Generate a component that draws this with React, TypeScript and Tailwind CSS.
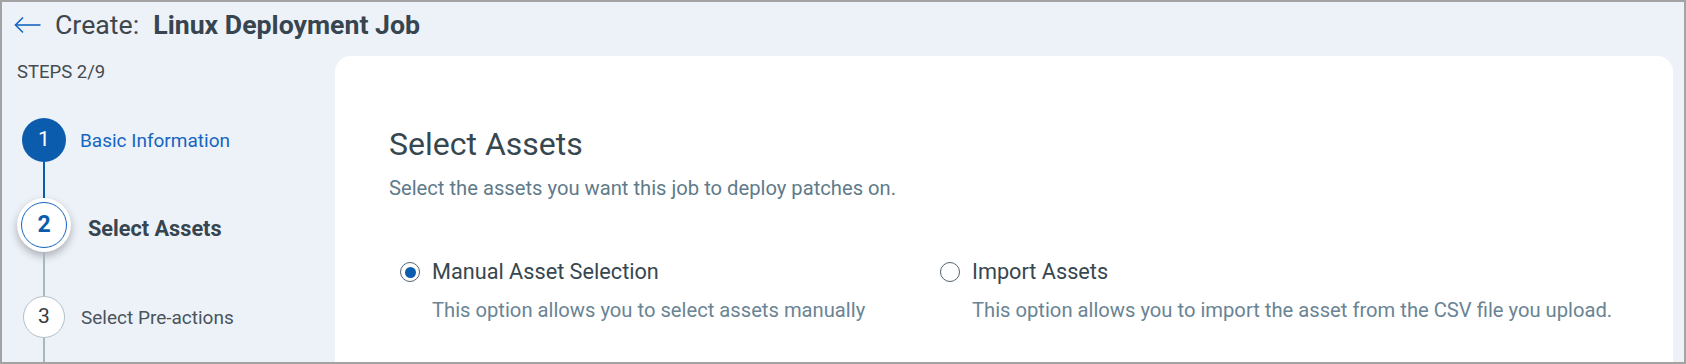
import { useState } from "react";

const steps = [
    { n: 1, label: "Basic Information" },
    { n: 2, label: "Select Assets" },
    { n: 3, label: "Select Pre-actions" },
];

const options = [
    { id: "manual", title: "Manual Asset Selection", desc: "This option allows you to select assets manually" },
    { id: "import", title: "Import Assets", desc: "This option allows you to import the asset from the CSV file you upload." },
];

const Radio = ({ checked }: { checked: boolean }) => (
    <div className="w-[20px] h-[20px] rounded-full border border-[#53636e] bg-white flex items-center justify-center shrink-0">
        {checked && <div className="w-[11px] h-[11px] rounded-full bg-[#0b5cad]" />}
    </div>
);

const App = () => {
    const [selected, setSelected] = useState("manual");

    return (
        <div className="w-[1686px] h-[364px] overflow-hidden border-2 border-[#a3a3a3] bg-[#edf2f9] font-['Roboto',sans-serif]">
            {/* header */}
            <div className="h-[46px] flex items-center pl-[12px]">
                <svg width="28" height="18" viewBox="0 0 28 18" fill="none" stroke="#1565c0" strokeWidth="1.6">
                    <path d="M1.5 9H26.5" />
                    <path d="M9 1.5L1.5 9L9 16.5" strokeLinejoin="miter" />
                </svg>
                <span className="ml-[13px] text-[26.7px] leading-[30px] text-[#3f464c]">Create:</span>
                <span className="ml-[14px] text-[26.7px] leading-[30px] font-bold text-[#36454f]">Linux Deployment Job</span>
            </div>

            <div className="flex">
                {/* steps sidebar */}
                <div className="w-[333px] shrink-0 pt-[12px]">
                    <div className="pl-[15px] text-[18.5px] leading-[24px] text-[#454b50]">STEPS 2/9</div>
                    <div className="mt-[34px] pl-[15px] flex flex-col">
                        <div className="flex items-center h-[44px]">
                            <div className="w-[54px] flex justify-center">
                                <div className="w-[44px] h-[44px] rounded-full bg-[#0b5cad] text-white text-[21px] flex items-center justify-center">
                                    {steps[0].n}
                                </div>
                            </div>
                            <span className="ml-[9px] mt-[1px] text-[19px] leading-[24px] text-[#1665bf]">{steps[0].label}</span>
                        </div>
                        <div className="w-[54px] flex justify-center">
                            <div className="w-[2px] h-[36px] bg-[#0b5cad]" />
                        </div>
                        <div className="flex items-center h-[54px]">
                            <div className="w-[54px] h-[54px] rounded-full bg-white shadow-[0_4px_9px_rgba(0,0,0,0.28)] flex items-center justify-center">
                                <div className="w-[46px] h-[46px] rounded-full border border-[#1565c0] text-[#0b5cad] font-bold text-[23px] flex items-center justify-center">
                                    {steps[1].n}
                                </div>
                            </div>
                            <span className="ml-[17px] mt-[8px] text-[21.7px] leading-[28px] font-bold text-[#36454f]">{steps[1].label}</span>
                        </div>
                        <div className="w-[54px] flex justify-center">
                            <div className="w-[2px] h-[44px] bg-[#a9b7bf]" />
                        </div>
                        <div className="flex items-center h-[42px]">
                            <div className="w-[54px] flex justify-center">
                                <div className="w-[42px] h-[42px] rounded-full bg-white border border-[#b3c1c8] text-[#333b40] text-[21px] flex items-center justify-center">
                                    {steps[2].n}
                                </div>
                            </div>
                            <span className="ml-[10px] mt-[2px] text-[19px] leading-[24px] text-[#4a545b]">{steps[2].label}</span>
                        </div>
                        <div className="w-[54px] flex justify-center">
                            <div className="w-[2px] h-[40px] bg-[#a9b7bf]" />
                        </div>
                    </div>
                </div>

                {/* main card */}
                <div className="flex-1 mr-[11px] mt-[8px] h-[400px] bg-white rounded-t-[16px] pl-[54px] pt-[69px]">
                    <h2 className="text-[32px] leading-[38px] text-[#37474f]">Select Assets</h2>
                    <p className="mt-[12px] text-[20.2px] leading-[26px] text-[#5f7b8a]">
                        Select the assets you want this job to deploy patches on.
                    </p>
                    <div className="mt-[57px] ml-[11px] flex">
                        {options.map((o) => (
                            <div
                                key={o.id}
                                className="w-[540px] shrink-0 cursor-pointer"
                                onClick={() => setSelected(o.id)}
                            >
                                <div className="flex items-center gap-[12px] h-[28px]">
                                    <Radio checked={selected === o.id} />
                                    <span className="text-[21.7px] leading-[28px] text-[#37474f]">{o.title}</span>
                                </div>
                                <div className="mt-[11px] pl-[32px] text-[20.2px] leading-[26px] text-[#6a8494] whitespace-nowrap">
                                    {o.desc}
                                </div>
                            </div>
                        ))}
                    </div>
                </div>
            </div>
        </div>
    );
};

export default App;
